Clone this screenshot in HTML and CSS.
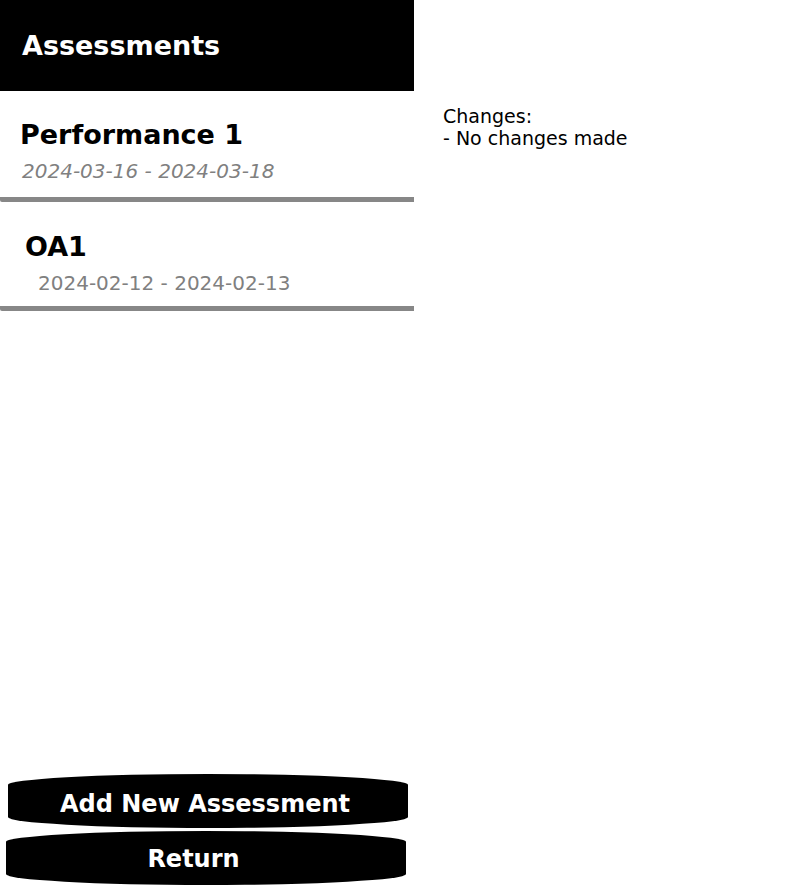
FILE: index.html
```html
<!DOCTYPE html>
<html>
<head>
<meta charset="utf-8">
<link rel="stylesheet" href="styles.css">
</head>
<body>
<div class="page">
  <div class="sidebar">
    <div class="header">Assessments</div>
    <div class="list">
      <div class="item item-first">
        <div class="title">Performance 1</div>
        <div class="dates">2024-03-16 - 2024-03-18</div>
      </div>
      <div class="item item-second">
        <div class="title">OA1</div>
        <div class="dates">2024-02-12 - 2024-02-13</div>
      </div>
    </div>
    <div class="actions">
      <button class="btn btn-add">Add New Assessment</button>
      <button class="btn btn-return">Return</button>
    </div>
  </div>
  <div class="details">
    <div class="changes">
      <div>Changes:</div>
      <div>- No changes made</div>
    </div>
  </div>
</div>
</body>
</html>
```

FILE: styles.css
```css
html, body {
  margin: 0;
  padding: 0;
  background: #ffffff;
}
body {
  font-family: "DejaVu Sans", Verdana, sans-serif;
  color: #000;
}
.page {
  display: flex;
  height: 896px;
}
.sidebar {
  width: 414px;
  display: flex;
  flex-direction: column;
  height: 100%;
}
.header {
  background: #000;
  color: #fff;
  height: 91px;
  box-sizing: border-box;
  padding-left: 22px;
  font-weight: bold;
  font-size: 27px;
  line-height: 32px;
  padding-top: 30px;
}
.list {
  display: flex;
  flex-direction: column;
}
.item {
  border-bottom: 5px solid #878787;
  border-radius: 0 0 0 2px;
}
.title {
  font-weight: bold;
  font-size: 27px;
  line-height: 32px;
}
.dates {
  font-size: 20px;
  line-height: 24px;
  color: #808080;
  margin-top: 8px;
}
.item-first {
  padding: 28px 0 14px 20px;
}
.item-first .dates {
  font-style: italic;
  padding-left: 2px;
}
.item-second {
  padding: 29px 0 11px 25px;
}
.item-second .dates {
  padding-left: 13px;
}
.actions {
  margin-top: auto;
  display: flex;
  flex-direction: column;
  gap: 3px;
  padding-bottom: 11px;
}
.btn {
  width: 400px;
  height: 54px;
  border: none;
  background: #000;
  color: #fff;
  font-family: "DejaVu Sans", Verdana, sans-serif;
  font-weight: bold;
  font-size: 24px;
  border-radius: 200px / 11px;
  cursor: pointer;
}
.btn-add {
  margin-left: 8px;
  padding: 5px 6px 0 0;
}
.btn-return {
  margin-left: 6px;
  padding: 2px 25px 0 0;
}
.details {
  flex: 1;
  padding: 105px 0 0 29px;
}
.changes {
  font-size: 19px;
  line-height: 22px;
}
```
